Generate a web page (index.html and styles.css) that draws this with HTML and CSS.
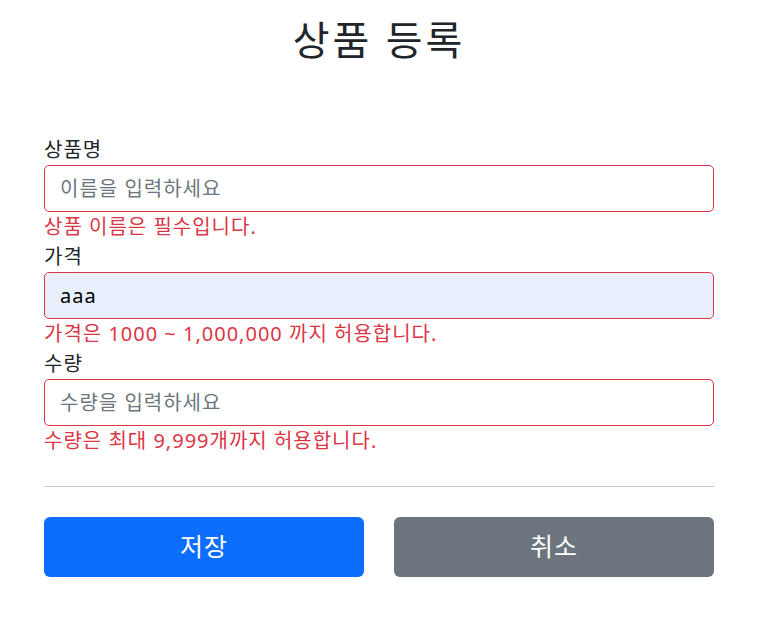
FILE: index.html
```html
<!DOCTYPE html>
<html lang="ko">
<head>
  <meta charset="UTF-8">
  <title>상품 등록</title>
  <link rel="stylesheet" href="styles.css">
</head>
<body>

  <div class="container">
    <div class="page-header">
      <h2>상품 등록</h2>
    </div>

    <form class="item-form">
      <div class="field">
        <label for="itemName">상품명</label>
        <input type="text" id="itemName" class="form-control is-invalid" placeholder="이름을 입력하세요">
        <div class="field-error">상품 이름은 필수입니다.</div>
      </div>
      <div class="field">
        <label for="price">가격</label>
        <input type="text" id="price" class="form-control is-invalid autofilled" value="aaa" placeholder="가격을 입력하세요">
        <div class="field-error">가격은 1000 ~ 1,000,000 까지 허용합니다.</div>
      </div>
      <div class="field">
        <label for="quantity">수량</label>
        <input type="text" id="quantity" class="form-control is-invalid" placeholder="수량을 입력하세요">
        <div class="field-error">수량은 최대 9,999개까지 허용합니다.</div>
      </div>

      <hr class="divider">

      <div class="actions">
        <button type="submit" class="btn btn-primary">저장</button>
        <button type="button" class="btn btn-secondary">취소</button>
      </div>
    </form>
  </div>

</body>
</html>
```

FILE: styles.css
```css
body {
  margin: 0;
  font-family: "Noto Sans", "Noto Sans CJK KR", sans-serif;
  font-size: 20px;
  line-height: 1.5;
  letter-spacing: 1px;
  color: #212529;
  background: #fff;
}
.container {
  width: 670px;
  margin: 0 0 0 44px;
}
.page-header {
  text-align: center;
  padding-top: 16px;
  margin-bottom: 71px;
}
.page-header h2 {
  margin: 0;
  font-size: 40px;
  font-weight: 400;
  line-height: 1.2;
  letter-spacing: 3px;
}
.field label {
  display: block;
}
.form-control {
  display: block;
  box-sizing: border-box;
  width: 100%;
  height: 47px;
  padding: 7px 15px;
  font-family: inherit;
  font-size: 20px;
  line-height: 1.5;
  letter-spacing: 1px;
  color: #212529;
  background: #fff;
  border: 1px solid #ced4da;
  border-radius: 5px;
  outline: none;
}
.form-control::placeholder {
  color: #6c757d;
}
.form-control.is-invalid {
  border-color: #dc3545;
}
.form-control.autofilled {
  background: #e8f0fe;
  color: #000;
}
.field-error {
  color: #dc3545;
}
.divider {
  margin: 30px 0;
  border: 0;
  border-top: 1px solid #c8c9ca;
}
.actions {
  display: grid;
  grid-template-columns: 1fr 1fr;
  gap: 30px;
}
.btn {
  height: 60px;
  font-family: inherit;
  font-size: 25px;
  line-height: 1.5;
  letter-spacing: 1px;
  color: #fff;
  border: 1px solid transparent;
  border-radius: 6px;
  cursor: pointer;
}
.btn-primary {
  background: #0d6efd;
}
.btn-secondary {
  background: #6c757d;
}
```
